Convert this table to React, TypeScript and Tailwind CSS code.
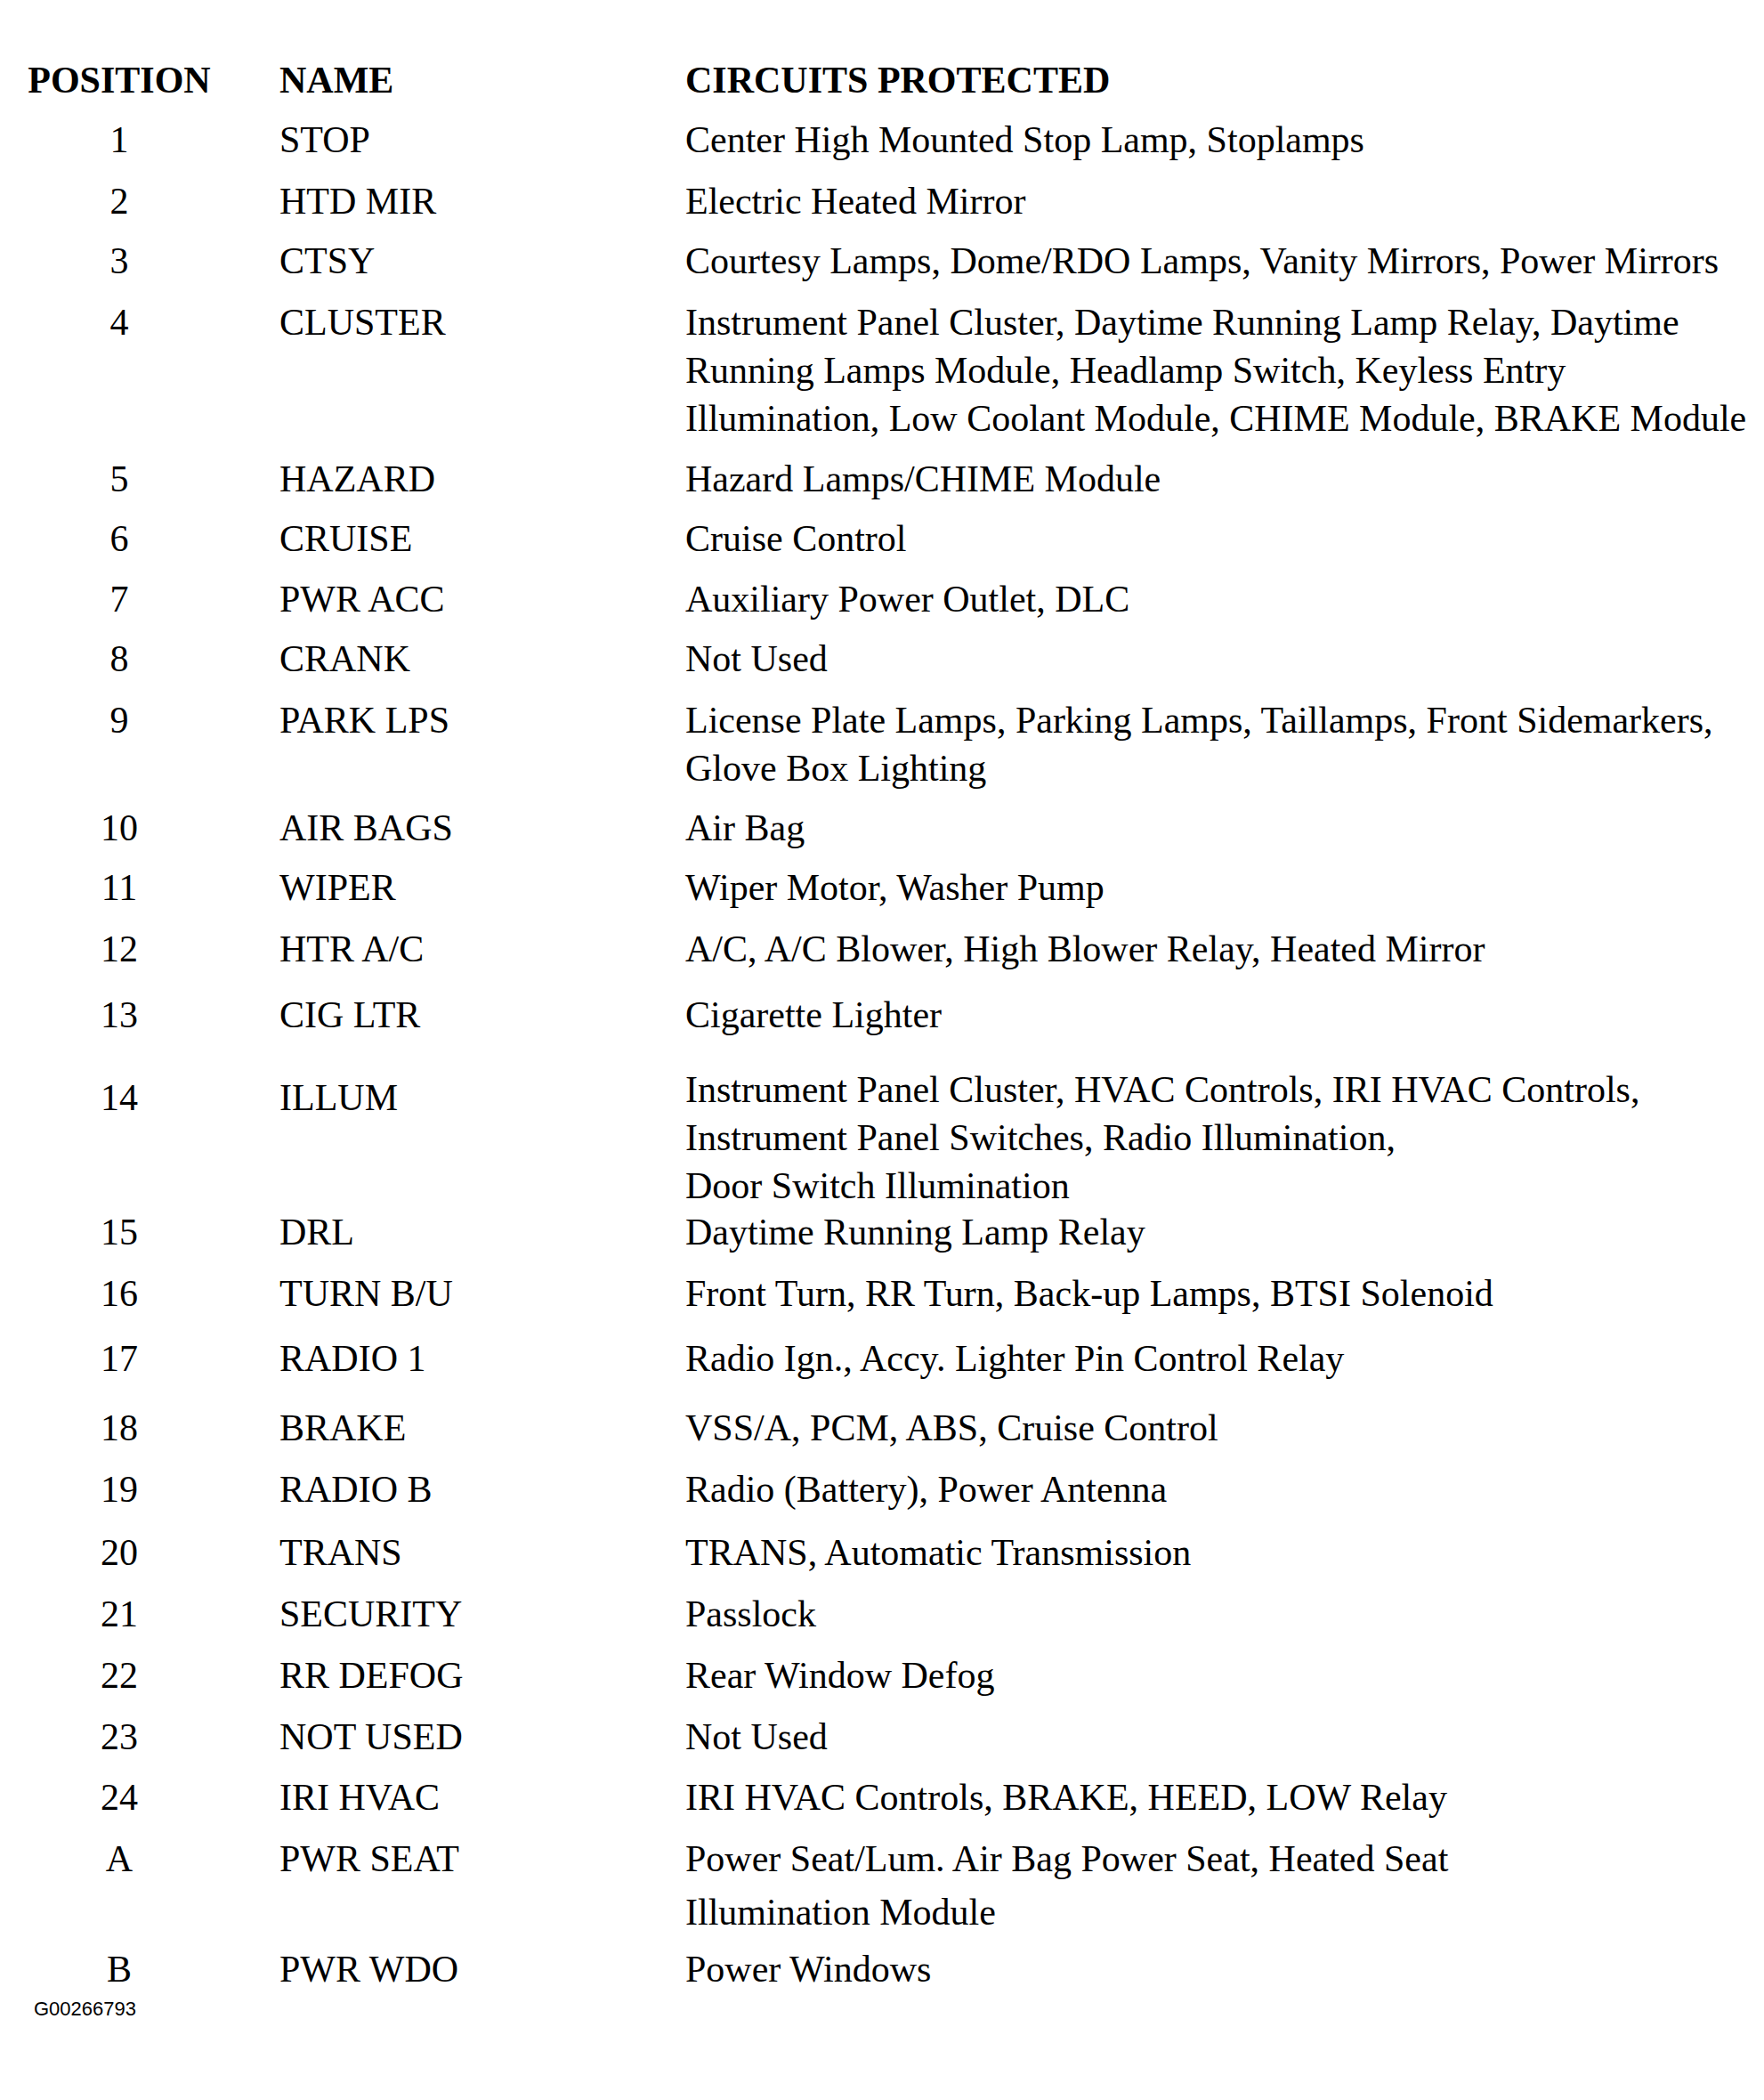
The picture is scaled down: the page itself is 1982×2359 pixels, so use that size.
type Fuse = {
  pos: string;
  name: string;
  lines: string[];
  h: string;
  shift?: boolean;
  wide?: boolean;
};

const fuses: Fuse[] = [
  { pos: "1", name: "STOP", lines: ["Center High Mounted Stop Lamp, Stoplamps"], h: "h-[69px]" },
  { pos: "2", name: "HTD MIR", lines: ["Electric Heated Mirror"], h: "h-[67px]" },
  { pos: "3", name: "CTSY", lines: ["Courtesy Lamps, Dome/RDO Lamps, Vanity Mirrors, Power Mirrors"], h: "h-[69px]" },
  {
    pos: "4",
    name: "CLUSTER",
    lines: [
      "Instrument Panel Cluster, Daytime Running Lamp Relay, Daytime",
      "Running Lamps Module, Headlamp Switch, Keyless Entry",
      "Illumination, Low Coolant Module, CHIME Module, BRAKE Module",
    ],
    h: "h-[176px]",
  },
  { pos: "5", name: "HAZARD", lines: ["Hazard Lamps/CHIME Module"], h: "h-[67px]" },
  { pos: "6", name: "CRUISE", lines: ["Cruise Control"], h: "h-[68px]" },
  { pos: "7", name: "PWR ACC", lines: ["Auxiliary Power Outlet, DLC"], h: "h-[67px]" },
  { pos: "8", name: "CRANK", lines: ["Not Used"], h: "h-[69px]" },
  {
    pos: "9",
    name: "PARK LPS",
    lines: ["License Plate Lamps, Parking Lamps, Taillamps, Front Sidemarkers,", "Glove Box Lighting"],
    h: "h-[121px]",
  },
  { pos: "10", name: "AIR BAGS", lines: ["Air Bag"], h: "h-[67px]" },
  { pos: "11", name: "WIPER", lines: ["Wiper Motor, Washer Pump"], h: "h-[69px]" },
  { pos: "12", name: "HTR A/C", lines: ["A/C, A/C Blower, High Blower Relay, Heated Mirror"], h: "h-[74px]" },
  { pos: "13", name: "CIG LTR", lines: ["Cigarette Lighter"], h: "h-[84px]" },
  {
    pos: "14",
    name: "ILLUM",
    lines: [
      "Instrument Panel Cluster, HVAC Controls, IRI HVAC Controls,",
      "Instrument Panel Switches, Radio Illumination,",
      "Door Switch Illumination",
    ],
    h: "h-[160px]",
    shift: true,
  },
  { pos: "15", name: "DRL", lines: ["Daytime Running Lamp Relay"], h: "h-[69px]" },
  { pos: "16", name: "TURN B/U", lines: ["Front Turn, RR Turn, Back-up Lamps, BTSI Solenoid"], h: "h-[73px]" },
  { pos: "17", name: "RADIO 1", lines: ["Radio Ign., Accy. Lighter Pin Control Relay"], h: "h-[78px]" },
  { pos: "18", name: "BRAKE", lines: ["VSS/A, PCM, ABS, Cruise Control"], h: "h-[69px]" },
  { pos: "19", name: "RADIO B", lines: ["Radio (Battery), Power Antenna"], h: "h-[71px]" },
  { pos: "20", name: "TRANS", lines: ["TRANS, Automatic Transmission"], h: "h-[69px]" },
  { pos: "21", name: "SECURITY", lines: ["Passlock"], h: "h-[69px]" },
  { pos: "22", name: "RR DEFOG", lines: ["Rear Window Defog"], h: "h-[69px]" },
  { pos: "23", name: "NOT USED", lines: ["Not Used"], h: "h-[68px]" },
  { pos: "24", name: "IRI HVAC", lines: ["IRI HVAC Controls, BRAKE, HEED, LOW Relay"], h: "h-[69px]" },
  {
    pos: "A",
    name: "PWR SEAT",
    lines: ["Power Seat/Lum. Air Bag Power Seat, Heated Seat", "Illumination Module"],
    h: "h-[124px]",
    wide: true,
  },
  { pos: "B", name: "PWR WDO", lines: ["Power Windows"], h: "h-[60px]" },
];

export default function App() {
  return (
    <div className="min-h-screen w-[1982px] bg-white pt-[63px] font-['Liberation_Serif',serif] text-[42px] leading-[54px] text-black">
      <div className="flex h-[67px] font-bold">
        <div className="w-[268px] text-center">POSITION</div>
        <div className="ml-[46px] w-[456px]">NAME</div>
        <div className="whitespace-nowrap">CIRCUITS PROTECTED</div>
      </div>

      {fuses.map((f) => (
        <div key={f.pos} className={`flex ${f.h}`}>
          <div className={`w-[268px] text-center ${f.shift ? "pt-[9px]" : ""}`}>{f.pos}</div>
          <div className={`ml-[46px] w-[456px] whitespace-nowrap ${f.shift ? "pt-[9px]" : ""}`}>{f.name}</div>
          <div className={`flex flex-col ${f.wide ? "gap-[6px]" : ""}`}>
            {f.lines.map((l) => (
              <span key={l} className="whitespace-nowrap">
                {l}
              </span>
            ))}
          </div>
        </div>
      ))}

      <p className="pl-[38px] font-['Liberation_Sans',sans-serif] text-[22px] leading-[24px]">G00266793</p>
    </div>
  );
}
